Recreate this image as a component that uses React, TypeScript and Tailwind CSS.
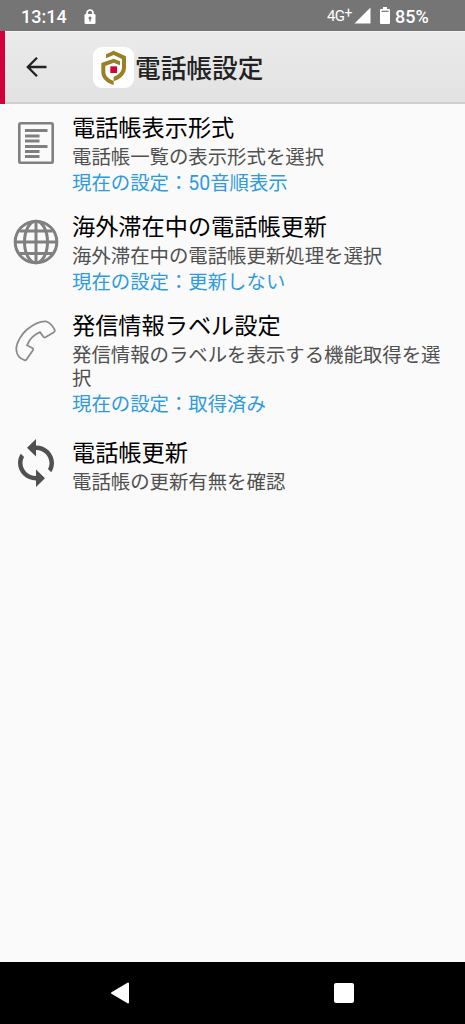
import React from 'react';

interface SettingItem {
  title: string;
  summary: string;
  current?: string;
  icon: React.ReactNode;
  rowClass: string;
}

const ListIcon = () => (
  <svg width="36" height="42" viewBox="0 0 36 42" fill="none">
    <rect x="1.3" y="1.3" width="33.4" height="39.4" rx="1.5" stroke="#808080" strokeWidth="2.6" />
    <path
      d="M7 8.5H29.5M7 14H21.5M7 19H21.5M7 24.5H29.5M7 29.5H21.5M7 34.5H21.5"
      stroke="#808080"
      strokeWidth="3.2"
    />
  </svg>
);

const GlobeIcon = () => (
  <svg width="46" height="46" viewBox="0 0 46 46" fill="none" stroke="#808080" strokeWidth="3" className="mt-px">
    <circle cx="23" cy="23" r="20.8" />
    <ellipse cx="23" cy="23" rx="11.5" ry="20.8" />
    <path d="M23 2V44M2 23H44M6.5 12H39.5M6.5 34.5H39.5" />
  </svg>
);

const PhoneIcon = () => (
  <svg width="42" height="42" viewBox="0 0 42 42" fill="none" className="mt-px">
    <path
      d="M9.5 40.2C5 38.5 1.5 34.5 1.3 29.5C1.1 23.5 6 14.5 12 9.5C18 4.5 25 1 31 1.3C34.5 1.8 38.5 7 39.8 10.2C40 11.2 39.5 11.8 38.5 12.5L30.5 17.3C29.5 17.8 28.8 17.5 28.3 16.8L25.2 12.2C19 14.5 14.5 19 12 25.3L17.3 28C18.3 28.5 18.4 29.3 17.9 30.2L11.5 39.5C11 40.3 10.3 40.5 9.5 40.2Z"
      stroke="#8c8c8c"
      strokeWidth="1.8"
      strokeLinejoin="round"
    />
  </svg>
);

const SyncIcon = () => (
  <svg width="36" height="48" viewBox="4 1 16 22" preserveAspectRatio="none" fill="#505050">
    <path d="M12 4V1L8 5l4 4V6c3.31 0 6 2.69 6 6 0 1.01-.25 1.97-.7 2.8l1.46 1.46C19.54 15.03 20 13.57 20 12c0-4.42-3.58-8-8-8z" />
    <path d="M12 18c-3.31 0-6-2.69-6-6 0-1.01.25-1.97.7-2.8L5.24 7.74C4.46 8.97 4 10.43 4 12c0 4.42 3.58 8 8 8v3l4-4-4-4v3z" />
  </svg>
);

const AppLogo = () => (
  <svg width="41" height="41" viewBox="0 0 123 123">
    <path
      d="M39 22L62 11L99 28V60C99 82 83 96 62 103V89C78 83 87 73 87 59V36L62 24L39 34Z"
      fill="#988027"
    />
    <path
      d="M25 48L62 35L81 43V55L62 47L37 57V75C37 88 49 97 62 102V114C40 108 25 93 25 76Z"
      fill="#988027"
    />
    <rect x="52" y="58" width="20" height="20" fill="#d6003a" />
  </svg>
);

const items: SettingItem[] = [
  {
    title: '電話帳表示形式',
    summary: '電話帳一覧の表示形式を選択',
    current: '現在の設定：50音順表示',
    icon: <ListIcon />,
    rowClass: 'h-[99px]',
  },
  {
    title: '海外滞在中の電話帳更新',
    summary: '海外滞在中の電話帳更新処理を選択',
    current: '現在の設定：更新しない',
    icon: <GlobeIcon />,
    rowClass: 'h-[99px]',
  },
  {
    title: '発信情報ラベル設定',
    summary: '発信情報のラベルを表示する機能取得を選択',
    current: '現在の設定：取得済み',
    icon: <PhoneIcon />,
    rowClass: 'h-[127px]',
  },
  {
    title: '電話帳更新',
    summary: '電話帳の更新有無を確認',
    icon: <SyncIcon />,
    rowClass: 'h-[67px]',
  },
];

const StatusBar = () => (
  <div className="flex h-[31px] shrink-0 items-center bg-[#757575] pl-[21px] pr-9 text-[18px] font-medium text-white">
    <span className="mt-0.5 w-[63px]">13:14</span>
    <svg width="12" height="15" viewBox="0 0 12 15" className="mt-px">
      <path d="M3 6V4A3 3 0 0 1 9 4V6" fill="none" stroke="white" strokeWidth="1.7" />
      <rect x="0.5" y="5" width="11" height="10" rx="1.3" fill="white" />
      <circle cx="6" cy="9" r="1.5" fill="#757575" />
      <rect x="5.4" y="9" width="1.2" height="3.5" fill="#757575" />
    </svg>
    <div className="ml-auto flex items-center">
      <span className="mt-0.5 w-7 whitespace-nowrap text-[15px] font-normal tracking-[-0.6px]">
        4G<span className="relative -top-[3px] text-[14px]">+</span>
      </span>
      <svg width="17" height="17" viewBox="0 0 17 17" fill="white" className="-ml-px mr-px">
        <path d="M16.5 0.5V16.5H0.5Z" />
      </svg>
      <svg width="10" height="17" viewBox="0 0 10 17" className="ml-2">
        <path d="M3 0H7V2H9A1 1 0 0 1 10 3V16A1 1 0 0 1 9 17H1A1 1 0 0 1 0 16V3A1 1 0 0 1 1 2H3Z" fill="white" />
        <path d="M1.5 4.3H8.5" stroke="#757575" strokeWidth="1.2" />
      </svg>
      <span className="ml-[5px] mt-0.5 w-[34px] whitespace-nowrap">85%</span>
    </div>
  </div>
);

const Header = () => (
  <header className="flex h-[73px] shrink-0 items-center border-b-2 border-t border-b-[#cfcfcf] border-t-[#f4f4f4] bg-linear-to-b from-[#ebebeb] to-[#e2e2e2]">
    <div className="-my-px h-[73px] w-[5px] bg-[#d1003a]" />
    <svg width="21" height="20" viewBox="0 0 21 20" className="ml-[21px]" fill="none" stroke="#222222" strokeWidth="2.3">
      <path d="M20.5 10H1.7M11 0.8L1.8 10L11 19.2" />
    </svg>
    <div className="ml-[46px] size-[41px] rounded-[9px] bg-white">
      <AppLogo />
    </div>
    <h1 className="ml-px mt-[3px] text-[25.7px] font-medium leading-[30px] text-[#222222]">電話帳設定</h1>
  </header>
);

const SettingRow = ({ item }: { item: SettingItem }) => (
  <li className={`flex ${item.rowClass}`}>
    <div className="flex h-full max-h-[77px] w-[72px] shrink-0 items-center justify-center">{item.icon}</div>
    <div className="pr-5 pt-[9px]">
      <h2 className="text-[23.2px] leading-[31px] text-black">{item.title}</h2>
      <p className="mt-[2px] text-[19.4px] leading-[23px] text-[#505050]">{item.summary}</p>
      {item.current && <p className="mt-[3px] text-[19.4px] leading-[23px] text-[#2e9bdf]">{item.current}</p>}
    </div>
  </li>
);

export default function App() {
  return (
    <div className="flex h-screen w-full flex-col overflow-hidden bg-[#fafafa] font-['Roboto','Noto_Sans_CJK_JP',sans-serif]">
      <StatusBar />
      <Header />
      <main className="flex-1">
        <ul>
          {items.map((item) => (
            <SettingRow key={item.title} item={item} />
          ))}
        </ul>
      </main>
      <nav className="flex h-[62px] shrink-0 items-center bg-black pl-[110px]">
        <svg width="20" height="22" viewBox="0 0 20 22" fill="white" stroke="white" strokeWidth="2" strokeLinejoin="round">
          <path d="M18 1.5V20.5L2 11Z" />
        </svg>
        <div className="ml-[204px] size-5 rounded-[2px] bg-white" />
      </nav>
    </div>
  );
}
